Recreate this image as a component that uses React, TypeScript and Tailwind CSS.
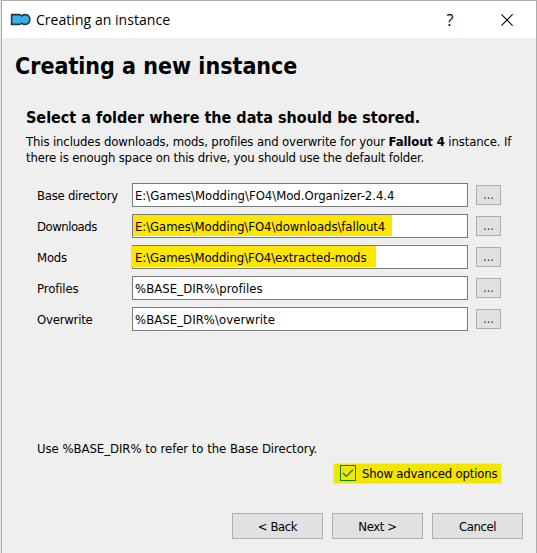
import React from "react";

type Row = { label: string; value: string; mark?: string; spacing: string; labelSpacing: string };

const rows: Row[] = [
  { label: "Base directory", value: "E:\\Games\\Modding\\FO4\\Mod.Organizer-2.4.4", spacing: "tracking-[-0.02px]", labelSpacing: "tracking-[-0.25px]" },
  { label: "Downloads", value: "E:\\Games\\Modding\\FO4\\downloads\\fallout4", mark: "left-0 top-0 h-[21px] w-[259px]", spacing: "tracking-[-0.06px]", labelSpacing: "tracking-[-0.5px]" },
  { label: "Mods", value: "E:\\Games\\Modding\\FO4\\extracted-mods", mark: "-left-[2px] top-0 h-[21px] w-[245px]", spacing: "tracking-[-0.07px]", labelSpacing: "tracking-[-0.2px]" },
  { label: "Profiles", value: "%BASE_DIR%\\profiles", spacing: "tracking-[0.07px]", labelSpacing: "tracking-[-0.1px]" },
  { label: "Overwrite", value: "%BASE_DIR%\\overwrite", spacing: "tracking-[0.05px]", labelSpacing: "tracking-[-0.22px]" },
];

function Logo() {
  return (
    <svg className="ml-[8px] block h-[14px] w-[22px] shrink-0" viewBox="0 0 22 14">
      <path
        d="M1.6 1.6H9C10.3 1.6 11 2.2 11.7 2.9C13 1.9 14.2 1.6 15.4 1.6C18.2 1.6 19.8 3.9 19.8 6.5C19.8 9.2 18 11.4 15.4 11.4C14 11.4 12.8 11.1 11.8 10.3C11 11.1 10 11.4 8.6 11.4H1.6Z"
        fill="#35b2ea"
        stroke="#29343b"
        strokeWidth="1.6"
      />
    </svg>
  );
}

function DialogButton({ children }: { children: React.ReactNode }) {
  return (
    <button className="flex h-[26px] w-[91px] items-center justify-center border border-[#adadad] bg-[#e1e1e1] pt-[2px] tracking-[-0.4px] whitespace-nowrap">
      {children}
    </button>
  );
}

export default function App() {
  return (
    <div className="flex h-[553px] w-[537px] bg-[#e6e6e6] pl-px font-['DejaVu_Sans_Condensed','DejaVu_Sans',sans-serif] text-[13px] leading-[16px] text-black font-stretch-condensed">
      <div className="flex min-w-0 flex-1 flex-col border-x border-t border-[#adadad] bg-[#efefef]">
        <header className="flex h-[37px] shrink-0 items-center bg-white">
          <Logo />
          <h1 className="ml-[4px] w-[390px] whitespace-nowrap font-['Open_Sans','Noto_Sans',sans-serif] text-[14px] leading-[20px] tracking-[0.04px] font-stretch-normal">
            Creating an instance
          </h1>
          <span className="ml-[20px] w-[8px] text-center font-['Open_Sans',sans-serif] text-[16px] leading-[20px] font-stretch-normal">?</span>
          <svg className="ml-[47px] h-[12px] w-[12px]" viewBox="0 0 12 12">
            <path d="M0.4 0.4L11.6 11.6M11.6 0.4L0.4 11.6" stroke="#000" strokeWidth="1.1" />
          </svg>
        </header>

        <h2 className="mt-[12px] pl-[13px] text-[23px] leading-[32px] font-bold whitespace-nowrap">
          Creating a new instance
        </h2>

        <section className="mt-[26px] pl-[24px]">
          <h3 className="text-[16px] leading-[20px] font-bold whitespace-nowrap">
            Select a folder where the data should be stored.
          </h3>
          <p className="mt-[6px] whitespace-nowrap">
            <span className="tracking-[-0.13px]">This includes downloads, mods, profiles and overwrite for your <b>Fallout 4</b> instance. If</span>
            <br />
            <span className="tracking-[-0.17px]">there is enough space on this drive, you should use the default folder.</span>
          </p>
        </section>

        <div className="mt-[17px] flex flex-col gap-[7px] pl-[35px]">
          {rows.map((r) => (
            <div key={r.label} className="flex h-[24px] items-center">
              <label className={"w-[95px] pt-[2px] whitespace-nowrap " + r.labelSpacing}>{r.label}</label>
              <div className="relative flex h-[24px] w-[336px] items-center border border-[#7a7a7a] bg-white pt-[2px] pl-[2px] whitespace-nowrap">
                {r.mark && <span className={"absolute bg-[#ffe600] " + r.mark} />}
                <span className={"relative " + r.spacing}>{r.value}</span>
              </div>
              <button className="ml-[8px] flex h-[20px] w-[25px] items-center justify-center border border-[#adadad] bg-[#e1e1e1] text-[#1c3442]">
                ...
              </button>
            </div>
          ))}
        </div>

        <p className="mt-[110px] pl-[35px] tracking-[-0.04px] whitespace-nowrap">
          Use %BASE_DIR% to refer to the Base Directory.
        </p>

        <label className="mt-[6px] ml-[331px] flex h-[21px] w-[169px] items-start border border-[#f4eb80] bg-[#f2e500] pl-[6px]">
          <svg className="mt-px h-[16px] w-[16px] shrink-0" viewBox="0 0 16 16" fill="none" stroke="#0d7a00">
            <path d="M0.5 0.5H15.5V15.5H0.5Z" />
            <path d="M3 8L6.2 11.4L13 4.7" strokeWidth="1.2" />
          </svg>
          <span className="mt-[2px] ml-[6px] tracking-[-0.18px] whitespace-nowrap">Show advanced options</span>
        </label>

        <footer className="mt-[29px] flex gap-[9px] pl-[230px]">
          <DialogButton>&lt; Back</DialogButton>
          <DialogButton>Next &gt;</DialogButton>
          <DialogButton>Cancel</DialogButton>
        </footer>
      </div>
    </div>
  );
}
